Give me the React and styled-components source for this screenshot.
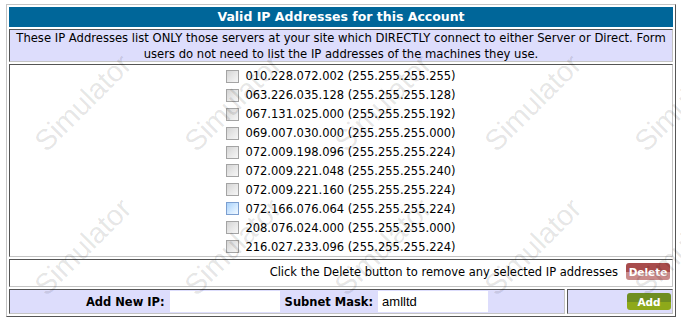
import React from "react";
import styled, { createGlobalStyle } from "styled-components";

const GlobalStyle = createGlobalStyle`
  html, body {
    margin: 0;
    padding: 0;
    background: #fff;
  }
  body {
    font-family: "DejaVu Sans", Verdana, sans-serif;
    color: #000;
  }
`;

const Page = styled.div`
  position: relative;
  width: 681px;
  height: 320px;
  overflow: hidden;
  padding: 4px 0 0 6px;
  box-sizing: border-box;
`;

const Frame = styled.div`
  width: 670px;
  box-sizing: border-box;
  border: 1px solid;
  border-color: #c4c4c4 #555 #555 #c4c4c4;
  padding: 2px;
  display: flex;
  flex-direction: column;
  gap: 2px;
`;

const Cell = styled.div`
  box-sizing: border-box;
  border: 1px solid;
  border-color: #555 #c4c4c4 #c4c4c4 #555;
  background: ${({ $bg }) => $bg || "#fff"};
  height: ${({ $height }) => $height};
`;

const Title = styled.div`
  height: 20px;
  background: #006699;
  color: #fff;
  font-weight: bold;
  font-size: 12.5px;
  line-height: 20px;
  text-align: center;
`;

const Description = styled(Cell)`
  font-size: 11.6px;
  line-height: 16px;
  text-align: center;
  padding: 0;
  white-space: nowrap;
`;

const List = styled(Cell)`
  display: flex;
  flex-direction: column;
  align-items: center;
  padding-top: 2px;
`;

const Row = styled.label`
  display: flex;
  align-items: center;
  height: 19.2px;
  font-size: 11.5px;
`;

const Check = styled.input.attrs({ type: "checkbox" })`
  appearance: none;
  width: 13px;
  height: 13px;
  margin: 0 6px 0 0;
  box-sizing: border-box;
  border: 1px solid ${({ $hot }) => ($hot ? "#7c9fd0" : "#a4a4a4")};
  background: ${({ $hot }) =>
    $hot
      ? "linear-gradient(135deg, #a9d2fb 0%, #d6ebff 60%, #f2f9ff 100%)"
      : "linear-gradient(135deg, #d4d4d4 0%, #e8e8e8 55%, #f6f6f6 100%)"};
`;

const DeleteBar = styled(Cell)`
  display: flex;
  justify-content: flex-end;
  align-items: center;
  gap: 8px;
  padding: 0 2px 3px 0;
  font-size: 11.5px;
`;

const AddBar = styled.div`
  display: flex;
  gap: 2px;
  height: 25px;
`;

const AddFields = styled(Cell)`
  flex: 1;
  display: flex;
  justify-content: center;
  align-items: center;
  gap: 5px;
`;

const AddAction = styled(Cell)`
  width: 106px;
  display: flex;
  justify-content: flex-end;
  align-items: center;
  padding-right: 1px;
`;

const Label = styled.span`
  font-weight: bold;
  font-size: 11.5px;
`;

const TextBox = styled.input`
  width: 110px;
  height: 21px;
  box-sizing: border-box;
  border: none;
  background: #fff;
  padding: 0 4px;
  font-family: "Liberation Sans", Arial, sans-serif;
  font-size: 13px;
  color: #000;
  outline: none;
`;

const tones = {
  red: ["#a84c4c", "#c98a8a"],
  green: ["#6f8e22", "#8ea91a"],
};

const Button = styled.button`
  width: 44px;
  height: 17px;
  padding: 0;
  border: none;
  border-radius: 3px;
  color: #fff;
  font-family: "DejaVu Sans", Verdana, sans-serif;
  font-weight: bold;
  font-size: 10.5px;
  background: ${({ $tone }) =>
    `linear-gradient(to bottom, ${tones[$tone][0]} 0%, ${tones[$tone][0]} 50%, ${tones[$tone][1]} 50%, ${tones[$tone][1]} 100%)`};
`;

const Watermark = styled.div`
  position: absolute;
  inset: 0;
  pointer-events: none;
  z-index: 2;
`;

const Mark = styled.span`
  position: absolute;
  transform: translate(-50%, -50%) rotate(-45deg);
  font-family: "Liberation Sans", Arial, sans-serif;
  font-size: 29px;
  color: rgba(0, 0, 0, 0.11);
  white-space: nowrap;
`;

const addresses = [
  ["010.228.072.002", "255.255.255.255"],
  ["063.226.035.128", "255.255.255.128"],
  ["067.131.025.000", "255.255.255.192"],
  ["069.007.030.000", "255.255.255.000"],
  ["072.009.198.096", "255.255.255.224"],
  ["072.009.221.048", "255.255.255.240"],
  ["072.009.221.160", "255.255.255.224"],
  ["072.166.076.064", "255.255.255.224"],
  ["208.076.024.000", "255.255.255.000"],
  ["216.027.233.096", "255.255.255.224"],
];

const marks = [];
[103, 247].forEach((y) => {
  [83, 233, 383, 533, 683].forEach((x) => marks.push({ x, y }));
});

export default function App() {
  return (
    <Page>
      <GlobalStyle />
      <Frame>
        <Title>Valid IP Addresses for this Account</Title>
        <Description $bg="#ddddfc" $height="33px">
          These IP Addresses list ONLY those servers at your site which DIRECTLY connect to either Server or Direct. Form
          <br />
          users do not need to list the IP addresses of the machines they use.
        </Description>
        <List $height="193px">
          {addresses.map(([ip, mask], i) => (
            <Row key={ip}>
              <Check $hot={i === 7} />
              {ip} ({mask})
            </Row>
          ))}
        </List>
        <DeleteBar $height="28px">
          <span>Click the Delete button to remove any selected IP addresses</span>
          <Button $tone="red">Delete</Button>
        </DeleteBar>
        <AddBar>
          <AddFields $bg="#ddddfc">
            <Label>Add New IP:</Label>
            <TextBox />
            <Label>Subnet Mask:</Label>
            <TextBox defaultValue="amlltd" />
          </AddFields>
          <AddAction $bg="#ddddfc">
            <Button $tone="green">Add</Button>
          </AddAction>
        </AddBar>
      </Frame>
      <Watermark>
        {marks.map((m) => (
          <Mark key={`${m.x}-${m.y}`} style={{ left: m.x, top: m.y }}>
            Simulator
          </Mark>
        ))}
      </Watermark>
    </Page>
  );
}
